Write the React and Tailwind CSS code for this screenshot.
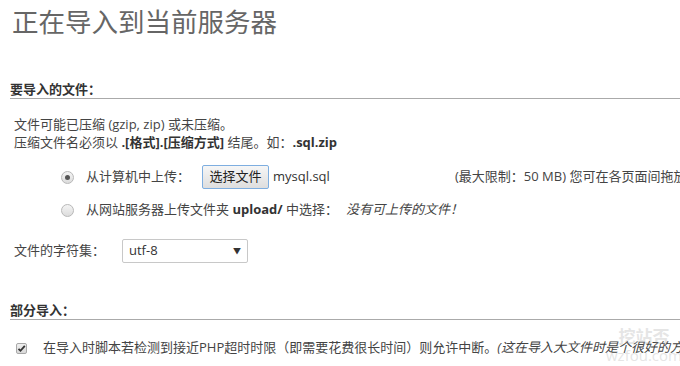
import React from "react";

function Radio({ checked }) {
  return (
    <span className="w-[13px] h-[13px] rounded-full border border-[#b8b8b8] bg-gradient-to-b from-[#f4f4f4] to-[#dcdcdc] flex items-center justify-center shrink-0">
      {checked && <span className="w-[5px] h-[5px] rounded-full bg-[#555]" />}
    </span>
  );
}

export default function App() {
  const font = { fontFamily: "'Open Sans','Noto Sans CJK SC',sans-serif" };
  return (
    <div
      className="w-[680px] h-[366px] overflow-hidden bg-white relative text-[13px] text-[#444]"
      style={font}
    >
      <div className="pt-[7px] pl-[12px] text-[26.5px] leading-[30px] text-[#666] whitespace-nowrap">
        正在导入到当前服务器
      </div>

      <div className="mt-[43px] ml-[10px] w-[700px] leading-[18px] font-bold text-[#333] border-b border-[#aaa]">
        要导入的文件：
      </div>

      <div className="mt-[16px] pl-[14px] leading-[18px] whitespace-nowrap">
        <div>文件可能已压缩 (gzip, zip) 或未压缩。</div>
        <div>
          压缩文件名必须以 <b className="text-[#333]">.[格式].[压缩方式]</b> 结尾。如：
          <b className="text-[#333]">.sql.zip</b>
        </div>
      </div>

      <div className="mt-[14px] pl-[61px] flex items-center h-[24px] whitespace-nowrap">
        <Radio checked />
        <span className="ml-[12px] w-[104px] shrink-0">从计算机中上传：</span>
        <div className="ml-[12px] w-[253px] shrink-0 flex items-center">
          <span className="h-[24px] w-[67px] shrink-0 flex items-center justify-center border border-[#7eaee0] rounded-[2px] bg-gradient-to-b from-[#f6f6f6] to-[#dedede] text-[#222]">
            选择文件
          </span>
          <span className="ml-[4px] text-[#333]">mysql.sql</span>
        </div>
        <span className="shrink-0">(最大限制：50 MB) 您可在各页面间拖放文件。</span>
      </div>

      <div className="mt-[11px] pl-[61px] flex items-center h-[20px] whitespace-nowrap">
        <Radio />
        <span className="ml-[12px] shrink-0">
          从网站服务器上传文件夹 <b className="text-[#333]">upload/</b> 中选择：
        </span>
        <i className="ml-[8px] shrink-0">没有可上传的文件！</i>
      </div>

      <div className="mt-[19px] pl-[14px] flex items-center h-[24px] whitespace-nowrap">
        <span className="w-[108px] shrink-0">文件的字符集：</span>
        <div className="w-[126px] h-[24px] shrink-0 border border-[#c8c8c8] rounded-[2px] flex items-center justify-between pl-[6px] pr-[6px] text-[#333]">
          <span>utf-8</span>
          <span className="text-[8px] text-[#333]">▼</span>
        </div>
      </div>

      <div className="mt-[38px] ml-[10px] w-[700px] leading-[18px] font-bold text-[#333] border-b border-[#aaa]">
        部分导入：
      </div>

      <div className="mt-[19px] pl-[16px] flex items-center h-[18px] whitespace-nowrap">
        <span className="w-[11px] h-[11px] rounded-[2px] border border-[#a8a8a8] bg-gradient-to-b from-[#f0f0f0] to-[#d8d8d8] flex items-center justify-center shrink-0">
          <svg width="9" height="9" viewBox="0 0 9 9">
            <path d="M1.5 4.8 L3.5 6.8 L7.8 1.8" fill="none" stroke="#333" strokeWidth="1.8" />
          </svg>
        </span>
        <span className="ml-[16px] shrink-0">
          在导入时脚本若检测到接近PHP超时时限（即需要花费很长时间）则允许中断。
          <i>(这在导入大文件时是个很好的方法，不过这会中断事务。)</i>
        </span>
      </div>

      <div className="absolute left-[606px] top-[328px] flex flex-col items-center text-[#999] opacity-25 leading-none pointer-events-none">
        <span className="text-[17px] font-bold">挖站否</span>
        <span className="text-[15px] mt-[3px]">wzfou.com</span>
      </div>
    </div>
  );
}
